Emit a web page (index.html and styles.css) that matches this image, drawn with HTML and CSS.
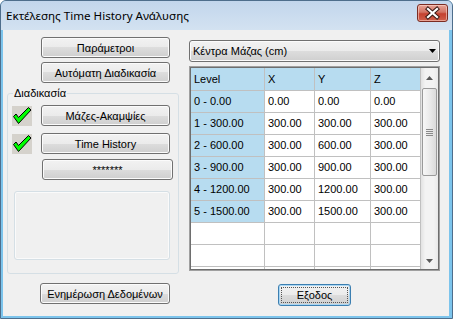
FILE: index.html
```html
<!DOCTYPE html>
<html lang="el">
<head>
    <meta charset="UTF-8">
    <meta name="viewport" content="width=device-width, initial-scale=1.0">
    <title>Εκτέλεσης Time History Ανάλυσης</title>
    <link rel="stylesheet" href="styles.css">
</head>
<body>
    <div class="window">
        <div class="titlebar">
            <span class="title">Εκτέλεσης Time History Ανάλυσης</span>
            <div class="close-btn">
                <svg width="29" height="16" viewBox="0 0 29 16">
                    <path d="M10 4 L19 12 M19 4 L10 12" stroke="#3a1a14" stroke-width="4.2" stroke-linecap="square" fill="none"/>
                    <path d="M10 4 L19 12 M19 4 L10 12" stroke="#ffffff" stroke-width="2.2" stroke-linecap="square" fill="none"/>
                </svg>
            </div>
        </div>

        <div class="client">
            <div class="left-col">
                <button class="btn btn-side">Παράμετροι</button>
                <button class="btn btn-side btn-auto">Αυτόματη Διαδικασία</button>

                <fieldset class="group">
                    <legend>Διαδικασία</legend>
                    <div class="step">
                        <svg class="check" width="20" height="20" viewBox="0 0 20 20">
                            <rect width="20" height="20" fill="#d5d2cc"/>
                            <polygon points="1.5,10.5 4,8 6.5,11.5 16.5,1.5 19,4 6.5,17.5" fill="#00ff00" stroke="#000" stroke-width="1"/>
                        </svg>
                        <button class="btn btn-step">Μάζες-Ακαμψίες</button>
                    </div>
                    <div class="step step-next">
                        <svg class="check" width="20" height="20" viewBox="0 0 20 20">
                            <rect width="20" height="20" fill="#d5d2cc"/>
                            <polygon points="1.5,10.5 4,8 6.5,11.5 16.5,1.5 19,4 6.5,17.5" fill="#00ff00" stroke="#000" stroke-width="1"/>
                        </svg>
                        <button class="btn btn-step">Time History</button>
                    </div>
                    <button class="btn btn-stars">*******</button>
                    <div class="log-box"></div>
                </fieldset>

                <button class="btn btn-update">Ενημέρωση Δεδομένων</button>
            </div>

            <div class="right-col">
                <div class="combo">
                    <span>Κέντρα Μάζας (cm)</span>
                    <svg width="7" height="4" viewBox="0 0 7 4"><polygon points="0,0 7,0 3.5,4" fill="#000"/></svg>
                </div>

                <div class="grid">
                    <div class="grid-body">
                        <table>
                            <colgroup>
                                <col class="c-level">
                                <col class="c-x">
                                <col class="c-y">
                                <col class="c-z">
                            </colgroup>
                            <tr class="head">
                                <td>Level</td><td>X</td><td>Y</td><td>Z</td>
                            </tr>
                            <tr><td class="lvl">0 - 0.00</td><td>0.00</td><td>0.00</td><td>0.00</td></tr>
                            <tr><td class="lvl">1 - 300.00</td><td>300.00</td><td>300.00</td><td>300.00</td></tr>
                            <tr><td class="lvl">2 - 600.00</td><td>300.00</td><td>600.00</td><td>300.00</td></tr>
                            <tr><td class="lvl">3 - 900.00</td><td>300.00</td><td>900.00</td><td>300.00</td></tr>
                            <tr><td class="lvl">4 - 1200.00</td><td>300.00</td><td>1200.00</td><td>300.00</td></tr>
                            <tr><td class="lvl">5 - 1500.00</td><td>300.00</td><td>1500.00</td><td>300.00</td></tr>
                            <tr><td></td><td></td><td></td><td></td></tr>
                            <tr><td></td><td></td><td></td><td></td></tr>
                            <tr><td></td><td></td><td></td><td></td></tr>
                        </table>
                    </div>
                    <div class="vscroll">
                        <div class="sb-btn sb-up">
                            <svg width="7" height="4" viewBox="0 0 7 4"><polygon points="0,4 7,4 3.5,0" fill="#5a5a5a"/></svg>
                        </div>
                        <div class="sb-thumb">
                            <svg width="7" height="7" viewBox="0 0 7 7">
                                <path d="M0 0.5 H7 M0 2.5 H7 M0 4.5 H7 M0 6.5 H7" stroke="#8a8a8a" stroke-width="1"/>
                            </svg>
                        </div>
                        <div class="sb-track"></div>
                        <div class="sb-btn sb-down">
                            <svg width="7" height="4" viewBox="0 0 7 4"><polygon points="0,0 7,0 3.5,4" fill="#5a5a5a"/></svg>
                        </div>
                    </div>
                </div>

                <button class="btn btn-exit"><span class="focus-ring">Εξοδος</span></button>
            </div>
        </div>
    </div>
</body>
</html>
```

FILE: styles.css
```css
* {
    box-sizing: border-box;
}
body {
    margin: 0;
    font-family: "Liberation Sans", Arial, sans-serif;
    font-size: 11px;
    color: #000;
    background: #fff;
}
.window {
    width: 453px;
    height: 319px;
    border: 1px solid #4e6e8c;
    border-radius: 6px 6px 0 0;
    background: #7cc4ec;
    display: flex;
    flex-direction: column;
    overflow: hidden;
}
.titlebar {
    height: 29px;
    display: flex;
    justify-content: space-between;
    align-items: center;
    padding: 0 4px 0 5px;
    background: linear-gradient(#c2d6ec, #d3e2f1);
}
.title {
    font-family: "Noto Sans", "Open Sans", sans-serif;
    font-size: 11.6px;
    color: #000;
    margin-top: -1px;
}
.close-btn {
    align-self: flex-start;
    margin-top: 3px;
    width: 31px;
    height: 18px;
    border: 1px solid #7b2c22;
    border-radius: 3px;
    background: linear-gradient(#e7a497, #d27363 45%, #c4412f 55%, #d0604c);
    box-shadow: inset 0 0 0 1px rgba(255, 220, 210, 0.55);
    display: flex;
}

.client {
    flex: 1;
    margin: 0 3px 2px 2px;
    background: #f0f0f0;
    display: flex;
    gap: 10px;
    padding: 0 9px 0 4px;
}

/* buttons */
.btn {
    display: block;
    font-family: "Liberation Sans", Arial, sans-serif;
    font-size: 11px;
    color: #000;
    padding: 0;
    height: 21px;
    border: 1px solid #707070;
    border-radius: 3px;
    background: linear-gradient(#f2f2f2, #ebebeb 50%, #dddddd 50%, #cfcfcf);
    box-shadow: inset 0 0 0 1px #fbfbfb;
    cursor: pointer;
}

.left-col {
    width: 172px;
    display: flex;
    flex-direction: column;
    align-items: flex-start;
}
.btn-side {
    width: 129px;
    margin: 7px 0 0 34px;
}
.btn-auto {
    margin-top: 4px;
}
.group {
    width: 172px;
    margin: 4px 0 0 0;
    padding: 5px 4px 13px 4px;
    border: 1px solid #d5dfe5;
    border-radius: 3px;
}
.group legend {
    padding: 0 1px;
    margin-left: 1px;
    line-height: 13px;
}
.step {
    display: flex;
    align-items: flex-start;
    gap: 9px;
}
.step-next {
    margin-top: 7px;
}
.check {
    display: block;
    margin-top: 1px;
}
.btn-step {
    width: 129px;
}
.btn-stars {
    width: 131px;
    margin: 5px 0 0 30px;
}
.log-box {
    width: 156px;
    height: 69px;
    margin: 11px 0 0 2px;
    border: 1px solid #d5dfe5;
    border-radius: 3px;
    box-shadow: inset 0 0 0 1px #fafafa;
}
.btn-update {
    width: 130px;
    margin: 9px 0 0 33px;
}

.right-col {
    width: 251px;
    display: flex;
    flex-direction: column;
}
.combo {
    margin-top: 10px;
    height: 22px;
    display: flex;
    justify-content: space-between;
    align-items: center;
    padding: 0 3px 0 3px;
    border: 1px solid #707070;
    border-radius: 3px;
    background: linear-gradient(#f2f2f2, #ebebeb 50%, #dddddd 50%, #cfcfcf);
    box-shadow: inset 0 0 0 1px #fbfbfb;
}

/* data grid */
.grid {
    margin-top: 4px;
    height: 205px;
    display: flex;
    border: 1px solid #a0a0a0;
    padding: 1px;
    background: #6e6e6e;
}
.grid-body {
    width: 230px;
    height: 201px;
    overflow: hidden;
    background: #fff;
}
.grid table {
    table-layout: fixed;
    width: 230px;
    border-collapse: separate;
    border-spacing: 0;
}
.c-level { width: 74px; }
.c-x { width: 50px; }
.c-y { width: 56px; }
.c-z { width: 50px; }
.grid tr {
    height: 22px;
}
.grid tr.head {
    height: 23px;
}
.grid td {
    padding: 0 3px;
    border-right: 1px solid #c0c0c0;
    border-bottom: 1px solid #c0c0c0;
    background: #fff;
    white-space: nowrap;
    overflow: hidden;
    line-height: 13px;
}
.grid tr.head td,
.grid td.lvl {
    background: #b7dcf0;
}
.vscroll {
    width: 17px;
    display: flex;
    flex-direction: column;
    background: linear-gradient(90deg, #e2e2e2, #f3f3f3 25%, #f3f3f3 75%, #e9e9e9);
}
.sb-btn {
    display: flex;
    align-items: center;
    justify-content: center;
    height: 17px;
}
.sb-up {
    height: 20px;
}
.sb-thumb {
    height: 88px;
    margin: 0 1px;
    border: 1px solid #9a9a9a;
    border-radius: 2px;
    background: linear-gradient(90deg, #f7f7f7, #ececec 45%, #dadada);
    display: flex;
    align-items: center;
    justify-content: center;
}
.sb-thumb svg {
    display: block;
}
.sb-track {
    flex: 1;
}

.btn-exit {
    width: 73px;
    height: 22px;
    margin: 13px auto 0;
    border-color: #3c7fb1;
    box-shadow: inset 0 0 0 1px #a9d6f3;
}
.focus-ring {
    display: flex;
    align-items: center;
    justify-content: center;
    margin: 2px;
    height: 16px;
    border: 1px dotted #555;
}
```
